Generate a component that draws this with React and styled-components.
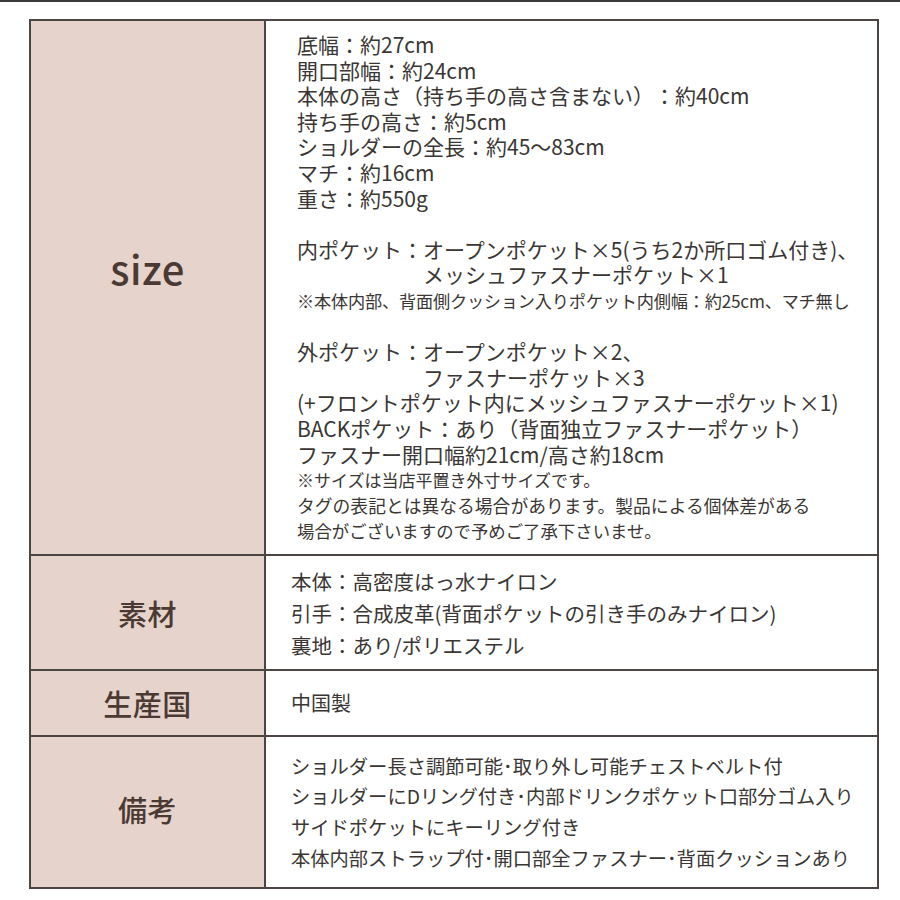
import React from 'react';
import styled, { createGlobalStyle } from 'styled-components';

const GlobalStyle = createGlobalStyle`
  html, body {
    margin: 0;
    padding: 0;
    background: #ffffff;
  }
  body {
    font-family: "Noto Sans CJK JP", "Noto Sans", sans-serif;
    color: #3a3634;
    text-spacing-trim: space-all;
  }
`;

const Page = styled.div`
  width: 900px;
  height: 900px;
  box-sizing: border-box;
  border-top: 2px solid #3a3a3a;
  padding: 17px 0 0 29px;
  background: #fff;
`;

const Table = styled.div`
  width: 850px;
  box-sizing: border-box;
  border: 2px solid #4b4644;
  display: flex;
  flex-direction: column;
`;

const Row = styled.div`
  display: grid;
  grid-template-columns: 235px 1fr;
  height: ${p => p.$h}px;
  border-top: ${p => (p.$first ? 'none' : '2px solid #4b4644')};
`;

const Label = styled.div`
  background: #e6d4cc;
  border-right: 2px solid #4b4644;
  display: flex;
  align-items: center;
  justify-content: center;
  padding-bottom: ${p => p.$lift || 0}px;
  box-sizing: border-box;
  color: #4a3a33;
  font-size: ${p => p.$size || 29}px;
  font-weight: 500;
  letter-spacing: 0.5px;
`;

const Content = styled.div`
  display: flex;
  flex-direction: column;
  justify-content: ${p => (p.$top ? 'flex-start' : 'center')};
  padding: ${p => (p.$top ? '11px 0 0 31px' : '0 0 0 25px')};
  box-sizing: border-box;
`;

const Line = styled.div`
  font-size: ${p => p.$fs || 21}px;
  line-height: ${p => p.$lh || 25.6}px;
  height: ${p => p.$lh || 25.6}px;
  white-space: nowrap;
  padding-left: ${p => (p.$indent ? 126 : 0)}px;
  letter-spacing: ${p => p.$ls || 0}px;
`;

const Blank = styled.div`
  height: 25.6px;
`;

const App = () => (
  <>
    <GlobalStyle />
    <Page>
      <Table>
        <Row $h={533} $first>
          <Label $size={40} $lift={40}>size</Label>
          <Content $top>
            <Line>底幅：約27cm</Line>
            <Line>開口部幅：約24cm</Line>
            <Line>本体の高さ（持ち手の高さ含まない）：約40cm</Line>
            <Line>持ち手の高さ：約5cm</Line>
            <Line>ショルダーの全長：約45〜83cm</Line>
            <Line>マチ：約16cm</Line>
            <Line>重さ：約550g</Line>
            <Blank />
            <Line>内ポケット：オープンポケット×5(うち2か所口ゴム付き)、</Line>
            <Line $indent>メッシュファスナーポケット×1</Line>
            <Line $fs={17.2} $ls={-0.2}>※本体内部、背面側クッション入りポケット内側幅：約25cm、マチ無し</Line>
            <Blank />
            <Line>外ポケット：オープンポケット×2、</Line>
            <Line $indent>ファスナーポケット×3</Line>
            <Line>(+フロントポケット内にメッシュファスナーポケット×1)</Line>
            <Line>BACKポケット：あり（背面独立ファスナーポケット）</Line>
            <Line>ファスナー開口幅約21cm/高さ約18cm</Line>
            <Line $fs={17}>※サイズは当店平置き外寸サイズです。</Line>
            <Line $fs={17.8}>タグの表記とは異なる場合があります。製品による個体差がある</Line>
            <Line $fs={17.4}>場合がございますので予めご了承下さいませ。</Line>
          </Content>
        </Row>
        <Row $h={113}>
          <Label>素材</Label>
          <Content>
            <Line $fs={20.5} $lh={32}>本体：高密度はっ水ナイロン</Line>
            <Line $fs={20.5} $lh={32}>引手：合成皮革(背面ポケットの引き手のみナイロン)</Line>
            <Line $fs={20.5} $lh={32}>裏地：あり/ポリエステル</Line>
          </Content>
        </Row>
        <Row $h={64}>
          <Label>生産国</Label>
          <Content>
            <Line $fs={20} $lh={32}>中国製</Line>
          </Content>
        </Row>
        <Row $h={150}>
          <Label $lift={6}>備考</Label>
          <Content>
            <Line $fs={19.3} $lh={30.7}>ショルダー長さ調節可能･取り外し可能チェストベルト付</Line>
            <Line $fs={19.3} $lh={30.7}>ショルダーにDリング付き･内部ドリンクポケット口部分ゴム入り</Line>
            <Line $fs={19.3} $lh={30.7}>サイドポケットにキーリング付き</Line>
            <Line $fs={19.3} $lh={30.7}>本体内部ストラップ付･開口部全ファスナー･背面クッションあり</Line>
          </Content>
        </Row>
      </Table>
    </Page>
  </>
);

export default App;
